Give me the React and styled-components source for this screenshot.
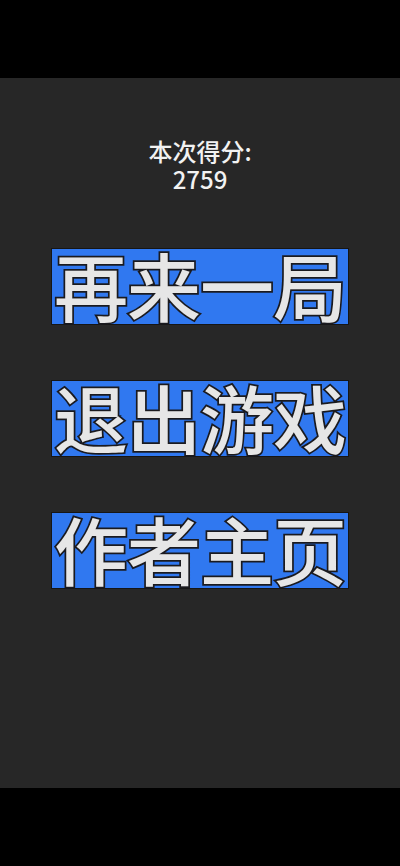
import React from "react";
import styled, { createGlobalStyle } from "styled-components";

const Global = createGlobalStyle`
  html, body { margin: 0; padding: 0; background: #000; }
  body { font-family: "Noto Sans CJK SC", "Noto Sans", sans-serif; }
`;

const Screen = styled.div`
  width: 400px;
  height: 866px;
  display: flex;
  flex-direction: column;
  background: #000;
`;

const Bar = styled.div`
  height: 78px;
  flex: none;
  background: #000;
`;

const Panel = styled.div`
  flex: 1;
  background: #272727;
  display: flex;
  flex-direction: column;
  align-items: center;
  padding-top: 59px;
  box-sizing: border-box;
`;

const Score = styled.div`
  color: #f2f2f2;
  font-size: 24px;
  font-weight: 500;
  line-height: 28px;
  text-align: center;
  margin-bottom: 55px;
`;

const Menu = styled.div`
  display: flex;
  flex-direction: column;
  gap: 55px;
`;

const MenuButton = styled.div`
  width: 298px;
  height: 77px;
  box-sizing: border-box;
  background: #3078f0;
  border: 1px solid #161616;
  display: flex;
  align-items: center;
  justify-content: center;
  padding-bottom: 5px;
  overflow: visible;
  font-size: 74px;
  font-weight: 500;
  line-height: 70px;
  letter-spacing: -1px;
  color: #e6e6e6;
  -webkit-text-stroke: 3.5px #1a1a1f;
  paint-order: stroke fill;
  white-space: nowrap;
`;

export default function App() {
  return (
    <>
      <Global />
      <Screen>
        <Bar />
        <Panel>
          <Score>
            本次得分:
            <br />
            2759
          </Score>
          <Menu>
            <MenuButton>再来一局</MenuButton>
            <MenuButton>退出游戏</MenuButton>
            <MenuButton>作者主页</MenuButton>
          </Menu>
        </Panel>
        <Bar />
      </Screen>
    </>
  );
}
